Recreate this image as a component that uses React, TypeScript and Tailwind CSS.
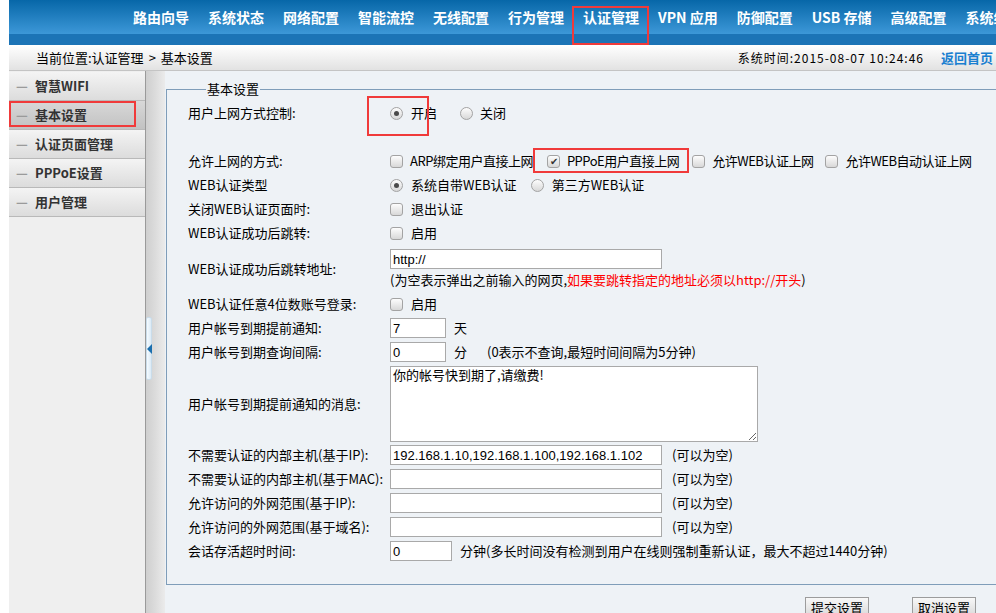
import type { ReactNode } from 'react';

const navItems = ['路由向导', '系统状态', '网络配置', '智能流控', '无线配置', '行为管理', '认证管理', 'VPN 应用', '防御配置', 'USB 存储', '高级配置', '系统维护'];
const sideItems = ['智慧WIFI', '基本设置', '认证页面管理', 'PPPoE设置', '用户管理'];

function Radio({ checked }: { checked?: boolean }) {
  return (
    <span className="flex h-[13px] w-[13px] shrink-0 items-center justify-center rounded-full border border-[#a3a3a3] bg-gradient-to-b from-[#fdfdfd] to-[#d8d8d8]">
      {checked && <span className="h-[5px] w-[5px] rounded-full bg-[#4a4a4a]" />}
    </span>
  );
}

function Check({ checked }: { checked?: boolean }) {
  return (
    <span className="flex h-[13px] w-[13px] shrink-0 items-center justify-center rounded-[3px] border border-[#a3a3a3] bg-gradient-to-b from-[#fdfdfd] to-[#d8d8d8] text-[10px] leading-none text-[#333]">
      {checked && '✔'}
    </span>
  );
}

function Row({ label, children, h = 'h-[24px]' }: { label: string; children?: ReactNode; h?: string }) {
  return (
    <div className={`flex ${h} items-center`}>
      <div className="w-[202px] shrink-0">{label}</div>
      <div className="flex items-center">{children}</div>
    </div>
  );
}

function TextInput({ w, value = '' }: { w: string; value?: string }) {
  return (
    <input
      readOnly
      value={value}
      className={`${w} h-[20px] border border-[#a9a9a9] bg-white px-[2px] font-['Liberation_Sans',sans-serif] text-[13px] text-black outline-none`}
    />
  );
}

export default function App() {
  return (
    <div className="flex h-[613px] w-[996px] flex-col overflow-hidden bg-white pl-[9px] font-['Noto_Sans_CJK_SC',sans-serif] text-[13px] leading-[16px] text-black">
      {/* top nav */}
      <div className="flex h-[45px] shrink-0 gap-[19px] bg-[linear-gradient(to_bottom,#0767a8_0%,#3d98d8_76%,#1c74b6_76%,#1c74b6_100%)] pl-[124px]">
        {navItems.map((n) => (
          <div key={n} className="relative shrink-0 whitespace-nowrap pt-[8px] text-[14px] font-bold leading-[18px] text-white">
            {n}
            {n === '认证管理' && (
              <span className="absolute -left-[11px] -right-[10px] top-[6px] bottom-0 border-2 border-[#f03a3a]" />
            )}
          </div>
        ))}
      </div>

      {/* breadcrumb */}
      <div className="flex h-[26px] shrink-0 items-center border-b border-[#c4c4c4] bg-gradient-to-b from-white to-[#e2e2e2] pl-[27px] pr-[3px]">
        <span>
          当前位置:认证管理<span className="mx-[5px]">&gt;</span>基本设置
        </span>
        <span className="ml-auto text-[12px] tracking-[1px]">系统时间:2015-08-07 10:24:46</span>
        <span className="ml-[17px] font-bold text-[#1a7fd0]">返回首页</span>
      </div>

      <div className="flex min-h-0 flex-1">
        {/* sidebar */}
        <div className="w-[137px] shrink-0 border-r border-[#9a9a9a] bg-[#efefef] pt-px">
          {sideItems.map((s, i) => (
            <div
              key={s}
              className={`relative flex h-[29px] items-center border-b border-[#b9b9b9] pl-[7px] font-bold text-[#333] ${
                i === 1 ? 'bg-gradient-to-b from-[#d8d8d8] to-[#c2c2c2]' : 'bg-gradient-to-b from-[#f4f4f4] to-[#dcdcdc]'
              }`}
            >
              <span className="w-[19px] text-[#9a9a9a]">—</span>
              {s}
              {i === 1 && <span className="absolute left-0 right-[9px] top-0 bottom-[2px] border-2 border-[#f03a3a]" />}
            </div>
          ))}
        </div>

        {/* splitter */}
        <div className="flex w-[19px] shrink-0 bg-gradient-to-r from-[#cfcfcf] via-[#dcdcdc] to-[#ebebeb]">
          <div className="mt-[246px] flex h-[63px] w-[6px] items-center justify-center rounded-[2px] border border-[#c9dcea] bg-gradient-to-r from-[#f5fbff] to-[#dbeaf6]">
            <span className="h-0 w-0 border-y-[5px] border-r-[5px] border-y-transparent border-r-[#1b6fae]" />
          </div>
        </div>

        {/* content */}
        <div className="min-w-0 flex-1 overflow-hidden bg-[#eef2f6] pl-px">
          <fieldset className="mt-[10px] w-[845px] border border-[#7f9db9] pb-[21px] pl-[21px] pt-[4px]">
            <legend className="ml-[18px] px-px leading-[16px]">基本设置</legend>

            <div className="relative">
              <Row label="用户上网方式控制:">
                <Radio checked />
                <span className="ml-[8px]">开启</span>
                <span className="ml-[23px]" />
                <Radio />
                <span className="ml-[7px]">关闭</span>
              </Row>
              <span className="absolute left-[179px] -top-[5px] h-[40px] w-[62px] border-2 border-[#f03a3a]" />
            </div>
            <div className="h-[24px]" />
            <Row label="允许上网的方式:">
              <span className="flex items-center tracking-[-0.5px]">
                <Check />
                <span className="ml-[7px]">ARP绑定用户直接上网</span>
                <span className="relative ml-[14px] flex items-center">
                  <Check checked />
                  <span className="ml-[7px]">PPPoE用户直接上网</span>
                  <span className="absolute -left-[14px] -right-[10px] -top-[5px] -bottom-[4px] border-2 border-[#f03a3a]" />
                </span>
                <span className="ml-[13px]" />
                <Check />
                <span className="ml-[7px]">允许WEB认证上网</span>
                <span className="ml-[12px]" />
                <Check />
                <span className="ml-[7px]">允许WEB自动认证上网</span>
              </span>
            </Row>
            <Row label="WEB认证类型">
              <Radio checked />
              <span className="ml-[8px]">系统自带WEB认证</span>
              <span className="ml-[14px]" />
              <Radio />
              <span className="ml-[8px]">第三方WEB认证</span>
            </Row>
            <Row label="关闭WEB认证页面时:">
              <Check />
              <span className="ml-[8px]">退出认证</span>
            </Row>
            <Row label="WEB认证成功后跳转:">
              <Check />
              <span className="ml-[8px]">启用</span>
            </Row>
            <div className="flex h-[47px] items-center">
              <div className="w-[202px] shrink-0">WEB认证成功后跳转地址:</div>
              <div className="flex flex-col self-start pt-[4px]">
                <TextInput w="w-[272px]" value="http://" />
                <div className="mt-[3px] whitespace-nowrap">
                  (为空表示弹出之前输入的网页,<span className="text-[#ff0000]">如果要跳转指定的地址必须以http://开头</span>)
                </div>
              </div>
            </div>
            <Row label="WEB认证任意4位数账号登录:">
              <Check />
              <span className="ml-[8px]">启用</span>
            </Row>
            <Row label="用户帐号到期提前通知:">
              <TextInput w="w-[56px]" value="7" />
              <span className="ml-[8px]">天</span>
            </Row>
            <Row label="用户帐号到期查询间隔:">
              <TextInput w="w-[56px]" value="0" />
              <span className="ml-[8px]">分</span>
              <span className="ml-[20px]">(0表示不查询,最短时间间隔为5分钟)</span>
            </Row>
            <div className="flex h-[79px] items-center">
              <div className="w-[202px] shrink-0">用户帐号到期提前通知的消息:</div>
              <textarea
                readOnly
                value="你的帐号快到期了,请缴费!"
                className="h-[76px] w-[368px] border border-[#a9a9a9] bg-white px-[2px] text-[13px] leading-[16px] outline-none"
              />
            </div>
            <Row label="不需要认证的内部主机(基于IP):">
              <TextInput w="w-[272px]" value="192.168.1.10,192.168.1.100,192.168.1.102" />
              <span className="ml-[10px]">(可以为空)</span>
            </Row>
            <Row label="不需要认证的内部主机(基于MAC):">
              <TextInput w="w-[272px]" />
              <span className="ml-[10px]">(可以为空)</span>
            </Row>
            <Row label="允许访问的外网范围(基于IP):">
              <TextInput w="w-[272px]" />
              <span className="ml-[10px]">(可以为空)</span>
            </Row>
            <Row label="允许访问的外网范围(基于域名):">
              <TextInput w="w-[272px]" />
              <span className="ml-[10px]">(可以为空)</span>
            </Row>
            <Row label="会话存活超时时间:">
              <TextInput w="w-[62px]" value="0" />
              <span className="ml-[8px] whitespace-nowrap">分钟(多长时间没有检测到用户在线则强制重新认证，最大不超过1440分钟)</span>
            </Row>
          </fieldset>

          <div className="mt-[12px] flex justify-end gap-[43px] pr-[20px]">
            <button className="h-[22px] w-[64px] border border-[#9c9c9c] bg-gradient-to-b from-[#f8f8f8] to-[#d6d6d6] text-[13px]">提交设置</button>
            <button className="h-[22px] w-[64px] border border-[#9c9c9c] bg-gradient-to-b from-[#f8f8f8] to-[#d6d6d6] text-[13px]">取消设置</button>
          </div>
        </div>
      </div>
    </div>
  );
}
